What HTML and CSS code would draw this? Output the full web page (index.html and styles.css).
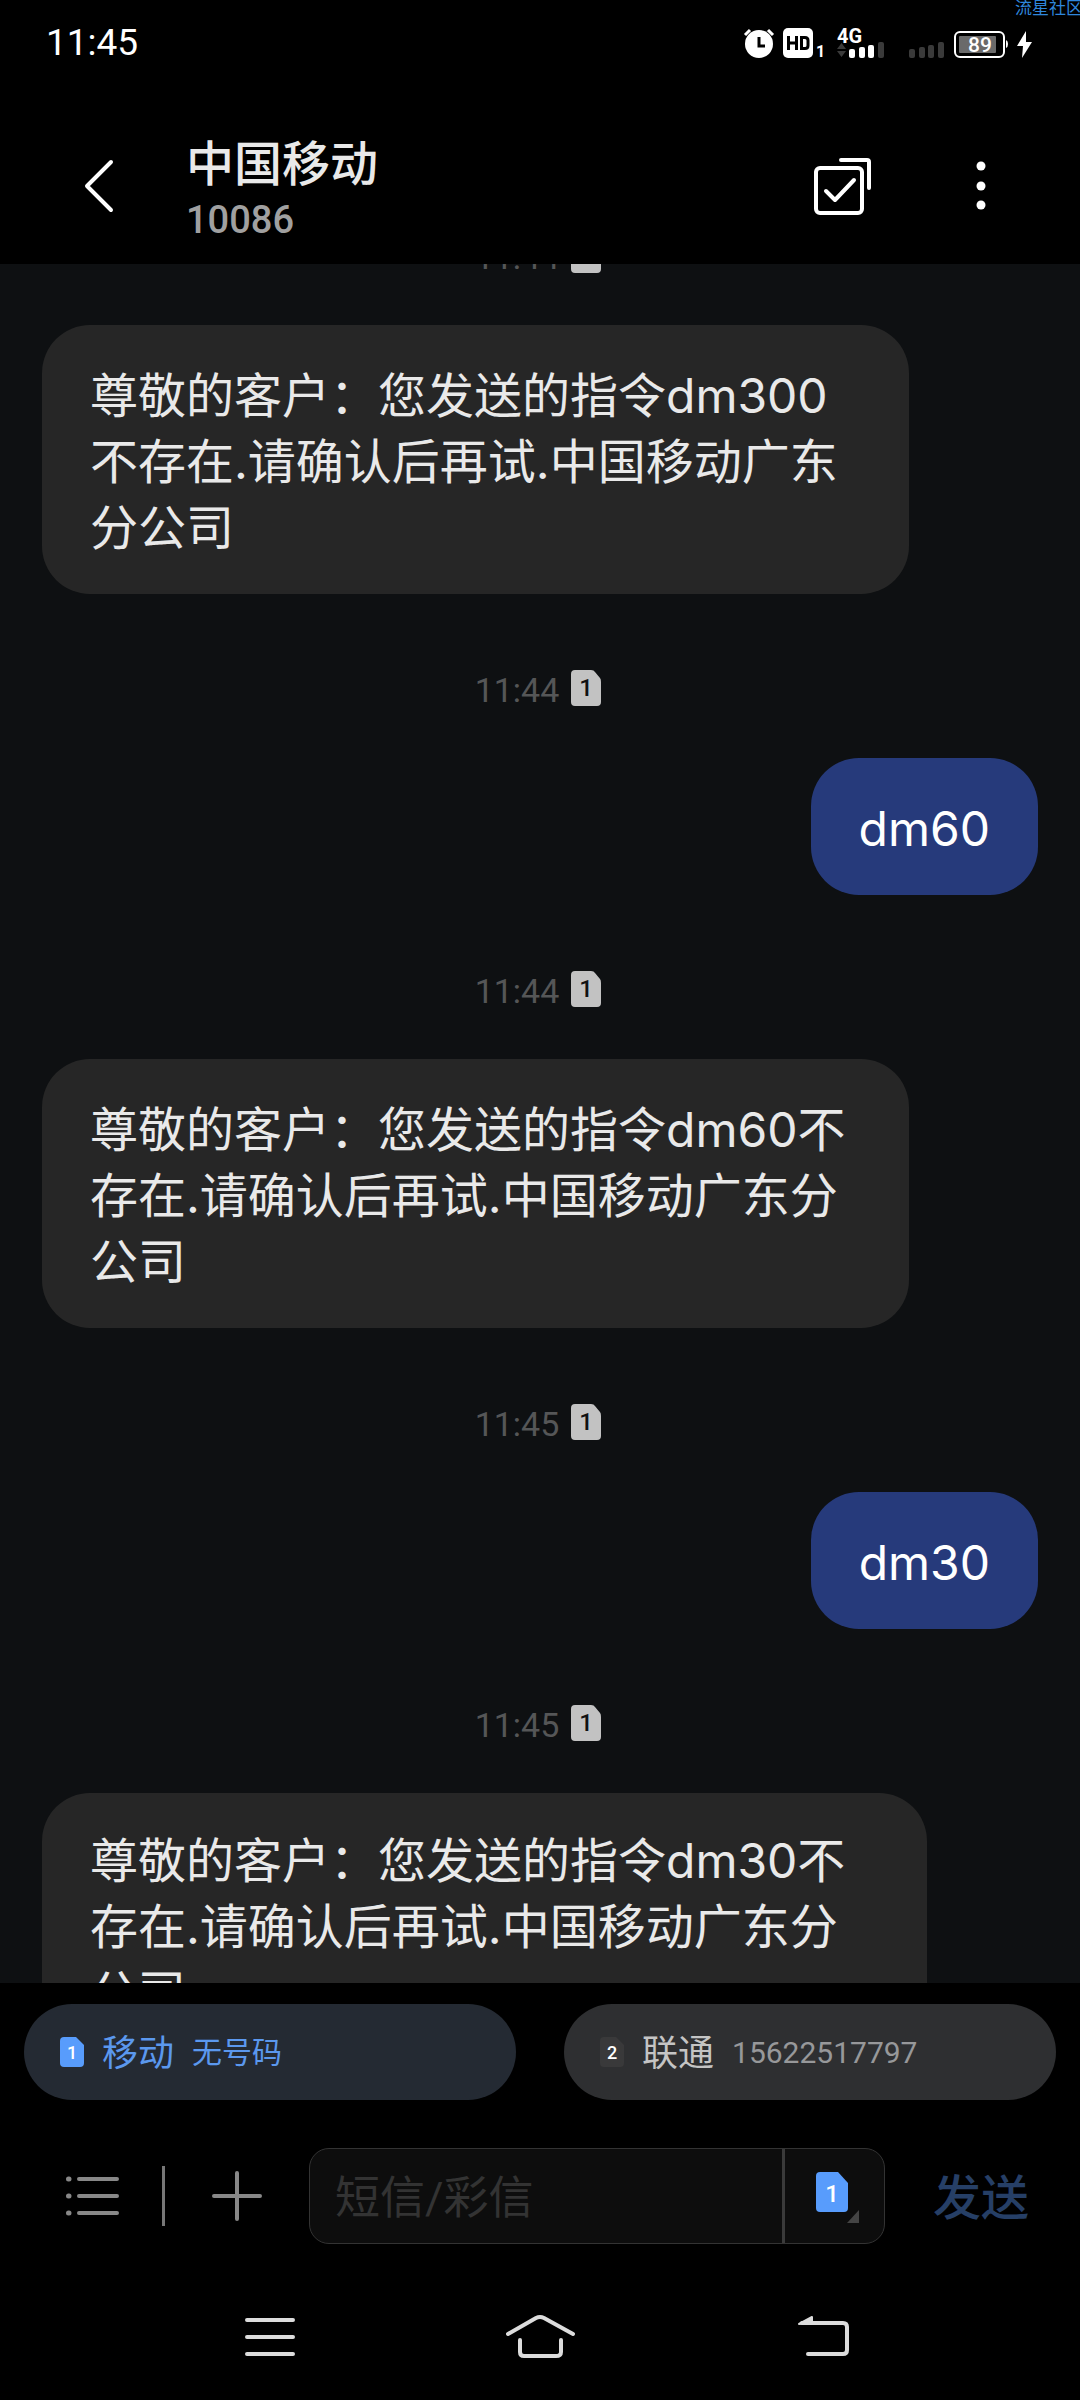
FILE: index.html
```html
<!DOCTYPE html>
<html lang="zh-CN">
<head>
<meta charset="utf-8">
<meta name="viewport" content="width=device-width, initial-scale=1">
<title>中国移动</title>
<link rel="stylesheet" href="styles.css">
</head>
<body>
<svg class="defs" aria-hidden="true">
  <symbol id="sim" viewBox="0 0 30 36">
    <path d="M4 0H20Q23 0 24 2L29 8Q30 9 30 12V32Q30 36 26 36H4Q0 36 0 32V4Q0 0 4 0Z"/>
  </symbol>
</svg>
<div class="phone">
  <div class="watermark">流星社区</div>
  <div class="status">
    <span class="clock">11:45</span>
    <div class="status-icons">
      <svg width="31" height="31" viewBox="0 0 31 31" aria-hidden="true">
        <circle cx="16" cy="16" r="14" fill="#fff"/>
        <path d="M2 7L7 2M25 2L30 7" stroke="#fff" stroke-width="3"/>
        <path d="M16 9V18H22" fill="none" stroke="#000" stroke-width="3"/>
      </svg>
      <svg width="45" height="31" viewBox="0 0 45 31" aria-hidden="true">
        <rect width="30" height="30" rx="5" fill="#fff"/>
        <path d="M5.500 8V22M13.500 8V22M5.500 15H13.500M18.500 9.500H22Q25 9.500 25 12.500V17.500Q25 20.500 22 20.500H18.500Z" fill="none" stroke="#000" stroke-width="3"/>
        <text class="mini-digit" x="33" y="29">1</text>
      </svg>
      <svg width="54" height="31" viewBox="0 0 54 31" aria-hidden="true">
        <text class="network" x="0" y="15">4G</text>
        <path d="M0 21L4.500 15L9 21ZM0 23L4.500 29L9 23Z" fill="#3a3a3a"/>
        <g fill="#fff"><rect x="12" y="21" width="6" height="9" rx="2"/><rect x="22" y="19" width="6" height="11" rx="2"/><rect x="31" y="17" width="6" height="13" rx="2"/></g>
        <rect x="41" y="14" width="6" height="16" rx="2" fill="#3a3a3a"/>
      </svg>
      <svg width="45" height="31" viewBox="0 0 45 31" aria-hidden="true">
        <g fill="#3a3a3a"><rect x="9" y="21" width="6" height="9" rx="2"/><rect x="19" y="19" width="6" height="11" rx="2"/><rect x="28" y="17" width="6" height="13" rx="2"/><rect x="38" y="14" width="6" height="16" rx="2"/></g>
      </svg>
      <svg width="54" height="31" viewBox="0 0 54 31" aria-hidden="true">
        <rect x="1" y="4" width="49" height="25" rx="5" fill="none" stroke="#fff" stroke-width="2"/>
        <rect x="5" y="8" width="37" height="17" rx="1" fill="#6a6a6a"/>
        <path d="M52 12Q54 13 54 16T52 20Z" fill="#fff"/>
        <text class="charge" x="26" y="24">89</text>
      </svg>
      <svg width="15" height="31" viewBox="0 0 15 31" aria-hidden="true">
        <path d="M9 3L0 18H6L5 30L15 14H9Z" fill="#fff"/>
      </svg>
    </div>
  </div>

  <header class="header">
    <button class="icon-button back" aria-label="返回">
      <svg width="32" height="54" viewBox="0 0 32 54"><path d="M28 3L4 27L28 51" fill="none" stroke="#fff" stroke-width="4" stroke-linecap="round" stroke-linejoin="round"/></svg>
    </button>
    <div class="contact">
      <h1 class="name">中国移动</h1>
      <p class="number">10086</p>
    </div>
    <button class="icon-button" aria-label="选择">
      <svg width="58" height="58" viewBox="0 0 58 58" fill="none" stroke="#fff" stroke-width="4" stroke-linecap="round" stroke-linejoin="round"><rect x="2" y="11" width="46" height="45" rx="4"/><path d="M12 34L21 43L40 23"/><path d="M27 3H53Q55 3 55 5V31"/></svg>
    </button>
    <button class="icon-button more" aria-label="更多">
      <svg width="10" height="50" viewBox="0 0 10 50" fill="#fff"><circle cx="5" cy="5" r="4.500"/><circle cx="5" cy="25" r="4.500"/><circle cx="5" cy="44" r="4.500"/></svg>
    </button>
  </header>

  <main class="chat">
    <div class="thread">
      <div class="stamp"><time>11:44</time><svg class="sim" viewBox="0 0 30 36"><use href="#sim"/><text x="15" y="26">1</text></svg></div>
      <p class="bubble received">尊敬的客户：您发送的指令dm300不存在.请确认后再试.中国移动广东分公司</p>
      <div class="stamp"><time>11:44</time><svg class="sim" viewBox="0 0 30 36"><use href="#sim"/><text x="15" y="26">1</text></svg></div>
      <p class="bubble sent">dm60</p>
      <div class="stamp"><time>11:44</time><svg class="sim" viewBox="0 0 30 36"><use href="#sim"/><text x="15" y="26">1</text></svg></div>
      <p class="bubble received">尊敬的客户：您发送的指令dm60不存在.请确认后再试.中国移动广东分公司</p>
      <div class="stamp"><time>11:45</time><svg class="sim" viewBox="0 0 30 36"><use href="#sim"/><text x="15" y="26">1</text></svg></div>
      <p class="bubble sent">dm30</p>
      <div class="stamp"><time>11:45</time><svg class="sim" viewBox="0 0 30 36"><use href="#sim"/><text x="15" y="26">1</text></svg></div>
      <p class="bubble received latest">尊敬的客户：您发送的指令dm30不存在.请确认后再试.中国移动广东分公司</p>
    </div>
  </main>

  <div class="sims">
    <button class="chip active">
      <svg class="chip-sim" viewBox="0 0 24 30"><path d="M4 0H16L24 8V26Q24 30 20 30H4Q0 30 0 26V4Q0 0 4 0Z"/><text x="12" y="22">1</text></svg>
      <span class="carrier">移动</span><span class="line-number">无号码</span>
    </button>
    <button class="chip">
      <svg class="chip-sim" viewBox="0 0 24 30"><path d="M4 0H16L24 8V26Q24 30 20 30H4Q0 30 0 26V4Q0 0 4 0Z"/><text x="12" y="22">2</text></svg>
      <span class="carrier">联通</span><span class="line-number">15622517797</span>
    </button>
  </div>

  <form class="composer">
    <button type="button" class="icon-button" aria-label="常用语">
      <svg width="54" height="40" viewBox="0 0 54 40" fill="none" stroke="#888" stroke-width="4" stroke-linecap="round"><path d="M13 3H51M13 20H51M13 37H51"/><path d="M2.500 3H3M2.500 20H3M2.500 37H3" stroke-width="5"/></svg>
    </button>
    <span class="separator"></span>
    <button type="button" class="icon-button" aria-label="添加">
      <svg width="50" height="50" viewBox="0 0 50 50" fill="none" stroke="#888" stroke-width="4" stroke-linecap="round"><path d="M2 25H48M25 2V48"/></svg>
    </button>
    <div class="field">
      <input class="message-input" type="text" placeholder="短信/彩信" aria-label="短信/彩信">
      <button type="button" class="sim-picker" aria-label="选择SIM卡">
        <svg width="44" height="52" viewBox="0 0 44 52"><path d="M4 0H22L32 11V36Q32 40 28 40H4Q0 40 0 36V4Q0 0 4 0Z" fill="#589cfc"/><text x="16" y="30">1</text><path d="M43 38V51H31Z" fill="#444"/></svg>
      </button>
    </div>
    <button class="send">发送</button>
  </form>

  <nav class="nav">
    <button class="icon-button" aria-label="菜单">
      <svg width="50" height="44" viewBox="0 0 50 44" stroke="#dcdcdc" stroke-width="4" stroke-linecap="round"><path d="M2 5H48M2 22H48M2 39H48"/></svg>
    </button>
    <button class="icon-button" aria-label="主页">
      <svg width="70" height="44" viewBox="0 0 70 44" fill="none" stroke="#dcdcdc" stroke-width="4" stroke-linecap="round" stroke-linejoin="round"><path d="M3 19L31 3Q35 1 39 3L68 19M15 25V37Q15 41 19 41H51Q56 41 56 37V25"/></svg>
    </button>
    <button class="icon-button" aria-label="返回上一级">
      <svg width="80" height="44" viewBox="0 0 80 44" fill="none" stroke="#dcdcdc" stroke-width="4" stroke-linecap="round"><path d="M32 8H73Q77 8 77 12V35Q77 39 73 39H38"/><path d="M29 9L42 2V8Z" fill="#dcdcdc" stroke-width="2" stroke-linejoin="round"/></svg>
    </button>
  </nav>
</div>
</body>
</html>
```
FILE: styles.css
```css
* {
  box-sizing: border-box;
}

body {
  margin: 0;
  background: #000;
  color: #e9e9e9;
  font-family: Roboto, "Noto Sans CJK SC", sans-serif;
}

h1, p {
  margin: 0;
}

button, input {
  margin: 0;
  padding: 0;
  border: 0;
  background: none;
  color: inherit;
  font: inherit;
}

svg {
  display: block;
  overflow: visible;
}

.defs {
  position: absolute;
  width: 0;
  height: 0;
}

.phone {
  position: relative;
  display: flex;
  flex-direction: column;
  height: 100vh;
  overflow: hidden;
}

.watermark {
  position: absolute;
  top: 0;
  right: -3px;
  font-size: 17px;
  line-height: 16px;
  color: #2f86dc;
}

/* Status bar */
.status {
  display: flex;
  flex: none;
  align-items: center;
  justify-content: space-between;
  height: 86px;
  padding: 0 48px 0 46px;
  color: #fff;
}

.clock {
  font-size: 37px;
  line-height: 44px;
}

.status-icons {
  display: flex;
  gap: 9px;
}

.mini-digit {
  font: 700 16px Roboto, sans-serif;
  fill: #fff;
}

.network {
  font: 700 20px Roboto, sans-serif;
  fill: #fff;
}

.charge {
  font: 500 21px Roboto, sans-serif;
  fill: #fff;
  text-anchor: middle;
}

/* Conversation header */
.header {
  display: flex;
  flex: none;
  align-items: center;
  height: 178px;
  padding: 22px 94px 0 83px;
}

.icon-button {
  display: flex;
  align-items: center;
  justify-content: center;
}

.back {
  margin-right: 71px;
}

.contact {
  flex: 1;
  padding-top: 4px;
}

.name {
  margin-bottom: 2px;
  font-size: 48px;
  font-weight: 500;
  line-height: 62px;
}

.number {
  font-size: 38px;
  font-weight: 500;
  line-height: 44px;
  color: #a0a0a0;
}

.more {
  margin-left: 104px;
}

/* Messages */
.chat {
  flex: 1;
  min-height: 0;
  overflow: hidden;
  background: #0e1012;
}

.thread {
  display: flex;
  flex-direction: column;
  margin-top: -27px;
  padding: 0 42px;
}

.stamp {
  display: flex;
  align-items: center;
  justify-content: center;
  gap: 12px;
  height: 36px;
  margin-bottom: 52px;
  padding-right: 4px;
  font-size: 34px;
  line-height: 40px;
  color: #555657;
}

.stamp time {
  padding-top: 4px;
}

.sim {
  width: 30px;
  height: 36px;
  fill: #c2c2c2;
}

.sim text {
  font: 500 24px Roboto, sans-serif;
  fill: #111;
  text-anchor: middle;
}

.bubble {
  margin-bottom: 76px;
  padding: 38px 48px 33px;
  border-radius: 48px;
  font-family: Inter, "Noto Sans CJK SC", sans-serif;
  font-size: 48px;
  line-height: 66px;
  word-break: break-all;
}

.received {
  align-self: flex-start;
  max-width: 867px;
  background: #262626;
}

.sent {
  align-self: flex-end;
  background: #263a7b;
  color: #fff;
}

.latest {
  max-width: 885px;
  padding: 35px 50px 36px 48px;
}

/* SIM choice */
.sims {
  display: grid;
  flex: none;
  grid-template-columns: 1fr 1fr;
  gap: 48px;
  padding: 21px 24px 24px;
}

.chip {
  display: flex;
  align-items: center;
  height: 96px;
  padding: 0 36px;
  border-radius: 48px;
  background: #2e2f31;
  color: #c4c4c4;
}

.chip.active {
  background: #242a33;
  color: #5b98ee;
}

.chip-sim {
  width: 24px;
  height: 30px;
  margin-right: 18px;
  fill: #39393a;
}

.active .chip-sim {
  fill: #589cfc;
}

.chip-sim text {
  font: 500 18px Roboto, sans-serif;
  fill: #fff;
  text-anchor: middle;
}

.carrier {
  margin-right: 18px;
  padding-top: 4px;
  font-size: 36px;
  line-height: 48px;
}

.line-number {
  padding-top: 2px;
  font-size: 30px;
  line-height: 40px;
  color: #97989a;
}

.active .line-number {
  color: inherit;
}

/* Message composer */
.composer {
  display: flex;
  flex: none;
  align-items: center;
  height: 144px;
  padding: 0 51px 0 66px;
}

.separator {
  width: 3px;
  height: 60px;
  margin: 0 47px 0 42px;
  background: #777;
}

.field {
  display: flex;
  flex: 1;
  min-width: 0;
  height: 96px;
  margin: 0 48px 0 47px;
  border: 1px solid #333;
  border-radius: 20px;
  background: #0d0d0d;
}

.message-input {
  flex: 1;
  min-width: 0;
  padding: 4px 25px 0;
  font-size: 45px;
}

.message-input::placeholder {
  color: #333;
  opacity: 1;
}

.sim-picker {
  display: flex;
  align-items: center;
  width: 102px;
  padding: 3px 0 0 31px;
  border-left: 3px solid #3a3a3a;
}

.sim-picker text {
  font: 500 24px Roboto, sans-serif;
  fill: #fff;
  text-anchor: middle;
}

.send {
  padding-top: 6px;
  font-size: 48px;
  font-weight: 500;
  line-height: 60px;
  color: #263f66;
}

/* System navigation */
.nav {
  display: grid;
  flex: none;
  grid-template-columns: repeat(3, 1fr);
  align-items: center;
  height: 132px;
  padding: 6px 12.5% 0;
}
```
